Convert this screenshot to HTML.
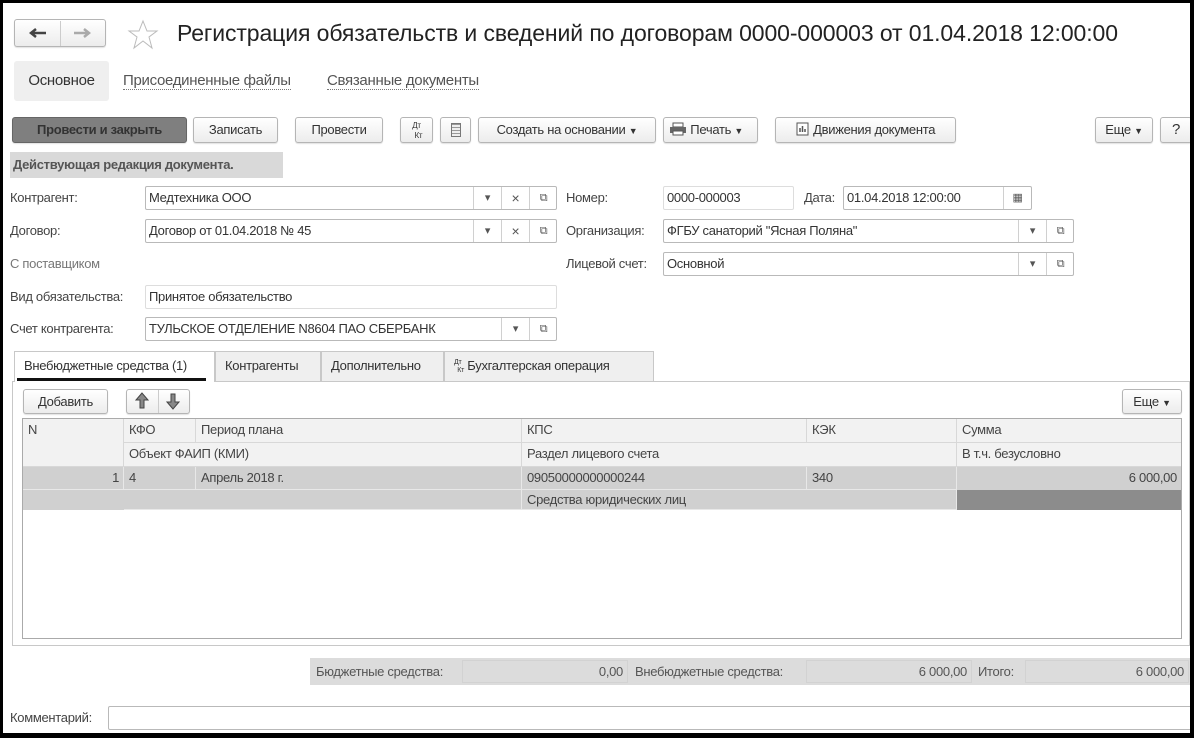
<!DOCTYPE html>
<html><head><meta charset="utf-8"><style>
*{box-sizing:border-box;margin:0;padding:0}
body{width:1194px;height:738px;background:#000;position:relative;overflow:hidden;font-family:"Liberation Sans",sans-serif;font-size:13px;color:#333;letter-spacing:-0.3px}
#pg{position:absolute;left:3px;top:3px;width:1187px;height:730px;background:#fff;overflow:hidden}
.a{position:absolute;white-space:nowrap}
.btn{position:absolute;height:26px;border:1px solid #b5b5b5;border-radius:3px;background:linear-gradient(#fff,#ececec);line-height:24px;text-align:center;color:#333;box-shadow:0 1px 1px rgba(0,0,0,.12)}
.fld{position:absolute;height:24px;border:1px solid #b9b9b9;border-radius:2px;background:#fff;line-height:22px;padding-left:3px;color:#333}
.lbl{position:absolute;color:#444;line-height:16px}
.ic{position:absolute;top:0;height:22px;border-left:1px solid #d0d0d0;width:28px;text-align:center;font-size:11px;color:#555}
.tab{position:absolute;top:348px;height:30px;border:1px solid #c8c8c8;border-bottom:none;background:#efefef;line-height:28px;padding:0 9px;color:#333}
.c{position:absolute;border-right:1px solid #d8d8d8;border-bottom:1px solid #d8d8d8;padding-left:5px;line-height:22px;color:#444}
.dd{font-size:9px}
</style></head><body><div id="pg">
<!-- nav -->
<div class="btn" style="left:11px;top:16px;width:92px;height:28px"></div>
<div class="a" style="left:57px;top:18px;width:1px;height:25px;background:#ccc"></div>
<svg class="a" style="left:25px;top:24px" width="20" height="12"><path d="M3 6h15M8 2L3 6l5 4" stroke="#444" stroke-width="2.5" fill="none"/></svg>
<svg class="a" style="left:69px;top:24px" width="20" height="12"><path d="M2 6h15M12 2l5 4-5 4" stroke="#aaa" stroke-width="2.5" fill="none"/></svg>
<svg class="a" style="left:124px;top:16px" width="32" height="32"><path d="M16 2l4 10h10l-8 6 3 11-9-7-9 7 3-11-8-6h10z" fill="none" stroke="#bbb"/></svg>
<div class="a" style="left:174px;top:17px;font-size:23px;color:#222;letter-spacing:-0.1px">Регистрация обязательств и сведений по договорам 0000-000003 от 01.04.2018 12:00:00</div>
<div class="a" style="left:11px;top:58px;width:95px;height:40px;background:#efefef;border-radius:3px;line-height:40px;text-align:center;font-size:15px;color:#333">Основное</div>
<div class="a" style="left:120px;top:69px;font-size:15px;color:#555;border-bottom:1px dotted #777;line-height:17px">Присоединенные файлы</div>
<div class="a" style="left:324px;top:69px;font-size:15px;color:#555;border-bottom:1px dotted #777;line-height:17px">Связанные документы</div>
<!-- toolbar -->
<div class="btn" style="left:9px;top:114px;width:175px;background:#7f7f7f;border-color:#666;color:#333;font-weight:bold">Провести и закрыть</div>
<div class="btn" style="left:190px;top:114px;width:85px">Записать</div>
<div class="btn" style="left:292px;top:114px;width:88px">Провести</div>
<div class="btn" style="left:397px;top:114px;width:33px;font-size:8px;line-height:10px;padding-top:3px">Дт<br>&nbsp;&nbsp;Кт</div>
<div class="btn" style="left:437px;top:114px;width:31px"><div style="margin:5px auto;width:10px;height:14px;border:1px solid #777;background:repeating-linear-gradient(#999 0 1px,#eee 1px 3px)"></div></div>
<div class="btn" style="left:475px;top:114px;width:178px">Создать на основании <span class="dd">▼</span></div>
<div class="btn" style="left:660px;top:114px;width:95px;text-align:left;padding-left:5px"><svg width="18" height="14" style="vertical-align:-2px"><rect x="4" y="1" width="10" height="4" fill="#fff" stroke="#555"/><rect x="1" y="5" width="16" height="6" fill="#666"/><rect x="4" y="9" width="10" height="4" fill="#fff" stroke="#555"/></svg> Печать <span class="dd">▼</span></div>
<div class="btn" style="left:772px;top:114px;width:181px"><svg width="14" height="14" style="vertical-align:-2px"><rect x="1" y="1" width="11" height="12" fill="#fff" stroke="#555"/><path d="M4 10V6M6.5 10V4M9 10V7" stroke="#555" stroke-width="1.5"/></svg> Движения документа</div>
<div class="btn" style="left:1092px;top:114px;width:58px">Еще <span class="dd">▼</span></div>
<div class="btn" style="left:1157px;top:114px;width:32px;font-size:15px">?</div>
<div class="a" style="left:7px;top:149px;width:273px;height:26px;background:#d9d9d9;line-height:26px;padding-left:3px;font-weight:bold;color:#555">Действующая редакция документа.</div>
<!-- form left -->
<div class="lbl" style="left:7px;top:187px">Контрагент:</div>
<div class="fld" style="left:142px;top:183px;width:412px">Медтехника ООО<div class="ic" style="left:327px">▾</div><div class="ic" style="left:355px;font-size:14px">×</div><div class="ic" style="left:383px">⧉</div></div>
<div class="lbl" style="left:7px;top:220px">Договор:</div>
<div class="fld" style="left:142px;top:216px;width:412px">Договор от 01.04.2018 № 45<div class="ic" style="left:327px">▾</div><div class="ic" style="left:355px;font-size:14px">×</div><div class="ic" style="left:383px">⧉</div></div>
<div class="lbl" style="left:7px;top:253px;color:#777">С поставщиком</div>
<div class="lbl" style="left:7px;top:286px">Вид обязательства:</div>
<div class="fld" style="left:142px;top:282px;width:412px;border-color:#ddd">Принятое обязательство</div>
<div class="lbl" style="left:7px;top:318px">Счет контрагента:</div>
<div class="fld" style="left:142px;top:314px;width:412px">ТУЛЬСКОЕ ОТДЕЛЕНИЕ N8604 ПАО СБЕРБАНК<div class="ic" style="left:355px">▾</div><div class="ic" style="left:383px">⧉</div></div>
<!-- form right -->
<div class="lbl" style="left:563px;top:187px">Номер:</div>
<div class="fld" style="left:660px;top:183px;width:131px;border-color:#ddd">0000-000003</div>
<div class="lbl" style="left:801px;top:187px">Дата:</div>
<div class="fld" style="left:840px;top:183px;width:189px">01.04.2018 12:00:00<div class="ic" style="left:159px">▦</div></div>
<div class="lbl" style="left:563px;top:220px">Организация:</div>
<div class="fld" style="left:660px;top:216px;width:411px">ФГБУ санаторий "Ясная Поляна"<div class="ic" style="left:354px">▾</div><div class="ic" style="left:382px">⧉</div></div>
<div class="lbl" style="left:563px;top:253px">Лицевой счет:</div>
<div class="fld" style="left:660px;top:249px;width:411px">Основной<div class="ic" style="left:354px">▾</div><div class="ic" style="left:382px">⧉</div></div>
<!-- tabs -->
<div class="a" style="left:9px;top:378px;width:1180px;height:1px;background:#c8c8c8"></div>
<div class="tab" style="left:11px;width:201px;background:#fff;height:31px">Внебюджетные средства (1)</div>
<div class="a" style="left:14px;top:375px;width:189px;height:3px;background:#111"></div>
<div class="tab" style="left:212px;width:106px">Контрагенты</div>
<div class="tab" style="left:318px;width:123px">Дополнительно</div>
<div class="tab" style="left:441px;width:210px"><span style="font-size:7px;line-height:8px;display:inline-block;vertical-align:middle">Дт<br>&nbsp;&nbsp;Кт</span> Бухгалтерская операция</div>
<div class="a" style="left:9px;top:379px;width:1px;height:263px;background:#c8c8c8"></div>
<div class="a" style="left:1186px;top:379px;width:1px;height:263px;background:#c8c8c8"></div>
<div class="a" style="left:9px;top:642px;width:1180px;height:1px;background:#c8c8c8"></div>
<div class="btn" style="left:20px;top:386px;width:85px;height:25px">Добавить</div>
<div class="btn" style="left:123px;top:386px;width:64px;height:25px"></div>
<div class="a" style="left:155px;top:387px;width:1px;height:23px;background:#ccc"></div>
<svg class="a" style="left:131px;top:389px" width="16" height="18"><path d="M8 1L2 8h4v8h4V8h4z" fill="#888" stroke="#444"/></svg>
<svg class="a" style="left:162px;top:389px" width="16" height="18"><path d="M8 17L2 10h4V2h4v8h4z" fill="#888" stroke="#444"/></svg>
<div class="btn" style="left:1119px;top:386px;width:60px;height:25px">Еще <span class="dd">▼</span></div>
<!-- table -->
<div class="a" style="left:19px;top:415px;width:1160px;height:221px;border:1px solid #aaa;background:#fff"></div>
<div class="a" style="left:20px;top:416px;width:1158px;height:48px;background:#f2f2f2"></div>
<div class="a" style="left:20px;top:464px;width:1158px;height:43px;background:#d0d0d0"></div>
<div class="c" style="left:20px;top:416px;width:101px;height:48px">N</div>
<div class="c" style="left:121px;top:416px;width:72px;height:24px">КФО</div>
<div class="c" style="left:193px;top:416px;width:326px;height:24px">Период плана</div>
<div class="c" style="left:519px;top:416px;width:285px;height:24px">КПС</div>
<div class="c" style="left:804px;top:416px;width:150px;height:24px">КЭК</div>
<div class="c" style="left:954px;top:416px;width:224px;height:24px;border-right:none">Сумма</div>
<div class="c" style="left:121px;top:440px;width:398px;height:24px">Объект ФАИП (КМИ)</div>
<div class="c" style="left:519px;top:440px;width:435px;height:24px">Раздел лицевого счета</div>
<div class="c" style="left:954px;top:440px;width:224px;height:24px;border-right:none">В т.ч. безусловно</div>
<div class="c" style="left:20px;top:464px;width:101px;height:23px;text-align:right;padding-right:4px;border-color:#e8e8e8">1</div>
<div class="c" style="left:121px;top:464px;width:72px;height:23px;border-color:#e8e8e8">4</div>
<div class="c" style="left:193px;top:464px;width:326px;height:23px;border-color:#e8e8e8">Апрель 2018 г.</div>
<div class="c" style="left:519px;top:464px;width:285px;height:23px;border-color:#e8e8e8">09050000000000244</div>
<div class="c" style="left:804px;top:464px;width:150px;height:23px;border-color:#e8e8e8">340</div>
<div class="c" style="left:954px;top:464px;width:224px;height:23px;text-align:right;padding-right:4px;border:none">6 000,00</div>
<div class="c" style="left:121px;top:487px;width:398px;height:20px;border-color:#e8e8e8"></div>
<div class="c" style="left:519px;top:487px;width:435px;height:20px;line-height:20px;border-color:#e8e8e8">Средства юридических лиц</div>
<div class="a" style="left:954px;top:487px;width:224px;height:20px;background:#8c8c8c"></div>
<!-- totals -->
<div class="a" style="left:307px;top:655px;width:880px;height:27px;background:#dcdcdc"></div>
<div class="lbl" style="left:313px;top:661px;color:#555">Бюджетные средства:</div>
<div class="a" style="left:459px;top:657px;width:166px;height:23px;border:1px solid #d2d2d2;line-height:21px;text-align:right;padding-right:4px;color:#555">0,00</div>
<div class="lbl" style="left:632px;top:661px;color:#555">Внебюджетные средства:</div>
<div class="a" style="left:803px;top:657px;width:166px;height:23px;border:1px solid #d2d2d2;line-height:21px;text-align:right;padding-right:4px;color:#555">6 000,00</div>
<div class="lbl" style="left:975px;top:661px;color:#555">Итого:</div>
<div class="a" style="left:1022px;top:657px;width:164px;height:23px;border:1px solid #d2d2d2;line-height:21px;text-align:right;padding-right:4px;color:#555">6 000,00</div>
<div class="lbl" style="left:7px;top:707px">Комментарий:</div>
<div class="fld" style="left:105px;top:703px;width:1084px"></div>
</div></body></html>
